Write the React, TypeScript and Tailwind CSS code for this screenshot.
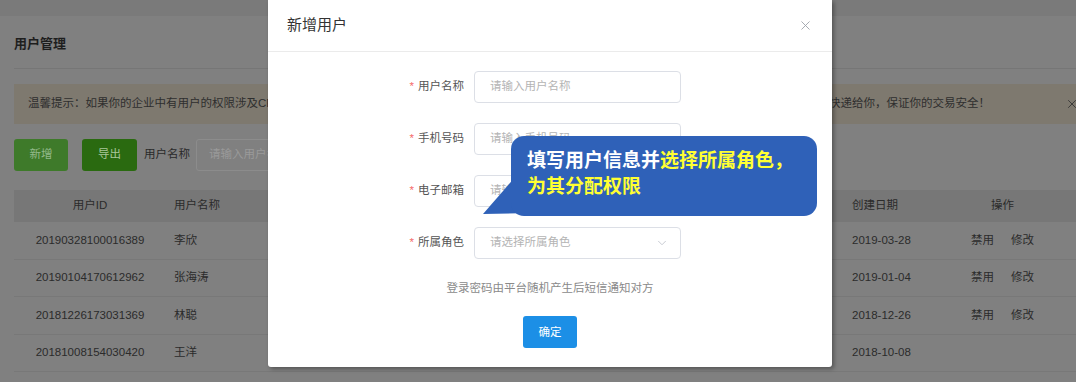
import { X, ChevronDown } from 'lucide-react';

const font = { fontFamily: '"Liberation Sans", "Noto Sans CJK SC", sans-serif' };

const rows = [
  { id: '20190328100016389', name: '李欣', date: '2019-03-28', actions: true },
  { id: '20190104170612962', name: '张海涛', date: '2019-01-04', actions: true },
  { id: '20181226173031369', name: '林聪', date: '2018-12-26', actions: true },
  { id: '20181008154030420', name: '王洋', date: '2018-10-08', actions: false },
];

const fields = [
  { label: '用户名称', placeholder: '请输入用户名称' },
  { label: '手机号码', placeholder: '请输入手机号码' },
  { label: '电子邮箱', placeholder: '请输入电子邮箱' },
];

function FormLabel({ text }: { text: string }) {
  return (
    <div className="w-[80px] shrink-0 text-right text-[11.5px] text-[#555]">
      <span className="text-[#f56c6c] mr-1">*</span>
      {text}
    </div>
  );
}

export default function App() {
  return (
    <div className="relative w-[1076px] h-[382px] overflow-hidden bg-[#808080]" style={font}>
      {/* dimmed page behind the modal */}
      <div className="h-[16px] bg-[#7a7a7a]" />
      <div className="pl-[14px]">
        <div className="h-[53px] flex items-center pt-1 border-b border-[#767676] mr-[-20px]">
          <span className="text-[13px] font-bold text-[#1e1e1e]">用户管理</span>
        </div>

        <div className="mt-[15px] h-[40px] w-[1080px] bg-[#7e796f] flex items-center text-[11.5px] text-[#2e2e2e] whitespace-nowrap">
          <span className="pl-[14px] w-[800px] overflow-hidden">温馨提示：如果你的企业中有用户的权限涉及CFO、财务等敏感岗位，请务必核实身份，平台会将账号信息以短信方式</span>
          <span className="ml-[15px]">快递给你，保证你的交易安全！</span>
          <X size={14} strokeWidth={1.5} className="ml-[75px] text-[#333]" />
        </div>

        <div className="mt-[15px] flex items-center h-[32px]">
          <div className="w-[54px] h-[32px] rounded-[3px] bg-[#3e7a2a] flex items-center justify-center text-[11.5px] text-[#93b98a]">新增</div>
          <div className="ml-[14px] w-[55px] h-[32px] rounded-[3px] bg-[#2a6a10] flex items-center justify-center text-[11.5px] text-[#a9c79a]">导出</div>
          <span className="ml-[7px] text-[11.5px] text-[#2a2a2a]">用户名称</span>
          <div className="ml-[6px] w-[200px] h-[32px] rounded-[3px] border border-[#8c8c8c] flex items-center pl-[12px] text-[11.5px] text-[#9a9a9a]">请输入用户名称</div>
        </div>

        <div className="mt-[19px] w-[1080px] text-[11.5px] text-[#2b2b2b]">
          <div className="h-[32px] flex items-center bg-[#777777]">
            <div className="w-[152px] text-center">用户ID</div>
            <div className="w-[686px] pl-[8px]">用户名称</div>
            <div className="w-[83px]">创建日期</div>
            <div className="w-[135px] text-center">操作</div>
          </div>
          {rows.map((r) => (
            <div key={r.id} className="h-[37.5px] flex items-center border-b border-[#787878]">
              <div className="w-[152px] text-center">{r.id}</div>
              <div className="w-[686px] pl-[8px]">{r.name}</div>
              <div className="w-[83px]">{r.date}</div>
              <div className="w-[135px] flex justify-center gap-[17px]">
                {r.actions && (
                  <>
                    <span>禁用</span>
                    <span>修改</span>
                  </>
                )}
              </div>
            </div>
          ))}
        </div>
      </div>

      {/* modal */}
      <div className="absolute left-[268px] top-0 w-[564px] h-[367px] bg-white rounded-b-[3px] shadow-[2px_2px_4px_rgba(0,0,0,0.35)] flex flex-col">
        <div className="h-[52px] shrink-0 flex items-center justify-between pl-[19px] pr-[19px] border-b border-[#ebebeb]">
          <span className="text-[15px] text-[#333]">新增用户</span>
          <X size={15} strokeWidth={1.4} className="text-[#9aa0a8]" />
        </div>

        <div className="flex flex-col gap-[20px] pt-[19px] pl-[116px]">
          {fields.map((f) => (
            <div key={f.label} className="flex items-center gap-[10px]">
              <FormLabel text={f.label} />
              <div className="w-[207px] h-[32px] rounded-[4px] border border-[#dcdfe6] flex items-center pl-[15px] text-[11.5px] text-[#b4b4b4]">
                {f.placeholder}
              </div>
            </div>
          ))}
          <div className="flex items-center gap-[10px]">
            <FormLabel text="所属角色" />
            <div className="w-[207px] h-[32px] rounded-[4px] border border-[#dcdfe6] flex items-center justify-between pl-[15px] pr-[11px] text-[11.5px] text-[#b4b4b4]">
              请选择所属角色
              <ChevronDown size={14} strokeWidth={1.5} className="text-[#c0c4cc]" />
            </div>
          </div>
        </div>

        <div className="mt-[21px] text-center text-[11.5px] text-[#8a8a8a]">登录密码由平台随机产生后短信通知对方</div>
        <div className="mt-[19px] flex justify-center">
          <div className="w-[54px] h-[32px] rounded-[3px] bg-[#1c8fe6] flex items-center justify-center text-[11.5px] text-white">确定</div>
        </div>
      </div>

      {/* callout bubble */}
      <svg className="absolute left-0 top-0" width="1076" height="382" viewBox="0 0 1076 382">
        <polygon points="483,214 516,176 532,213" fill="#2f61b8" />
      </svg>
      <div
        className="absolute left-[511px] top-[136px] w-[306px] h-[80px] rounded-[13px] bg-[#2f61b8] pl-[16px] pt-[10px] text-[19px] font-bold leading-[26px] text-white"
        style={{ fontFamily: '"Noto Sans CJK SC", sans-serif' }}
      >
        <div>
          填写用户信息并<span className="text-[#ffff33]">选择所属角色，</span>
        </div>
        <div className="text-[#ffff33]">为其分配权限</div>
      </div>
    </div>
  );
}
